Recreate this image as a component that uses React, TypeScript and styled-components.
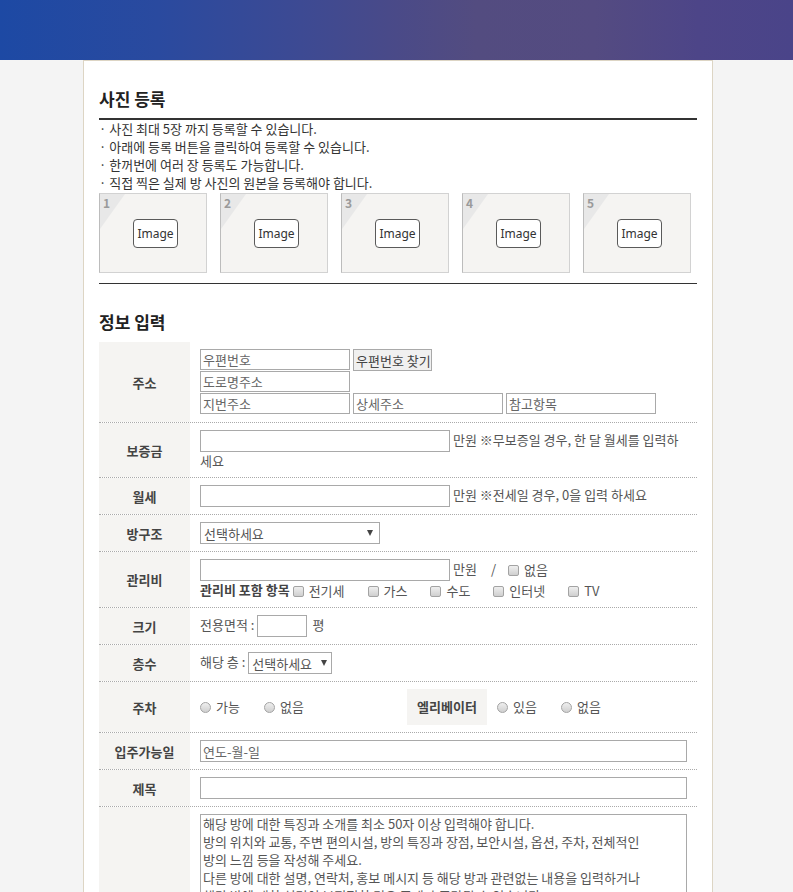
import React from 'react';
import styled, { createGlobalStyle } from 'styled-components';

const GlobalStyle = createGlobalStyle`
  * { box-sizing: border-box; }
  html, body { margin: 0; padding: 0; background: #f4f4f4; }
  body {
    font-family: "Noto Sans CJK KR", "Noto Sans", sans-serif;
    font-size: 13px;
    color: #333;
  }
`;

const Header = styled.header`
  height: 60px;
  background: linear-gradient(
    90deg,
    #1d49a4 0%,
    #2a4a9f 20%,
    #3d4a93 38%,
    #4a4a88 50%,
    #534c80 60%,
    #544b81 75%,
    #4d4588 88%,
    #4a4489 100%
  );
`;

const Page = styled.div`
  padding-left: 3px;
`;

const Container = styled.main`
  width: 630px;
  margin: 0 auto;
  background: #fff;
  border: 1px solid #ddd5c4;
  border-bottom: none;
  padding: 0 15px 60px;
`;

const SectionTitle = styled.h2<{ $underline?: boolean }>`
  margin: 0 0 ${(p) => (p.$underline ? 0 : 10)}px;
  padding: 28px 0 ${(p) => (p.$underline ? 9 : 0)}px;
  font-size: 17px;
  line-height: 20px;
  font-weight: 700;
  color: #222;
  border-bottom: ${(p) => (p.$underline ? '2px solid #333' : 'none')};
`;

const NoticeList = styled.ul`
  margin: 0;
  padding: 0;
  list-style: none;
  line-height: 18px;
  color: #333;
`;

const PhotoGrid = styled.div`
  display: flex;
  gap: 13px;
  margin-top: 1px;
  padding-bottom: 10px;
  border-bottom: 1px solid #333;
`;

const PhotoBox = styled.div`
  position: relative;
  width: 108px;
  height: 80px;
  background: #f5f4f2;
  border: 1px solid #d2d2d2;
  border-left-color: #bcbcbc;
  display: flex;
  align-items: center;
  justify-content: center;
  padding-left: 5px;
  &::before {
    content: '';
    position: absolute;
    top: 0;
    left: 0;
    width: 25px;
    height: 35px;
    background: #e8e8e8;
    clip-path: polygon(0 0, 100% 0, 0 100%);
  }
`;

const PhotoNum = styled.span`
  position: absolute;
  top: 1px;
  left: 3px;
  color: #9a9a9a;
  font-weight: 700;
  font-size: 12px;
  line-height: 16px;
  z-index: 1;
`;

const ImageButton = styled.button`
  position: relative;
  z-index: 1;
  width: 45px;
  height: 29px;
  padding: 0;
  background: #fff;
  border: 1px solid #5a5a5a;
  border-radius: 4px;
  font-family: "Noto Sans", sans-serif;
  font-size: 12px;
  color: #333;
`;

const FormTable = styled.div`
  display: flex;
  flex-direction: column;
`;

const Row = styled.div`
  display: grid;
  grid-template-columns: 91px 1fr;
  border-bottom: 1px dotted #aaa;
`;

const Th = styled.div`
  background: #f5f4f2;
  display: flex;
  align-items: center;
  justify-content: center;
  font-weight: 700;
  color: #444;
`;

const Td = styled.div<{ $pb?: number; $flex?: boolean }>`
  padding: 7px 10px ${(p) => p.$pb ?? 7}px;
  line-height: 18px;
  color: #555;
  min-width: 0;
  ${(p) => (p.$flex ? 'display: flex; align-items: center;' : '')}
`;

const AddressLine = styled.div`
  display: flex;
  align-items: flex-start;
  gap: 3px;
  height: 21px;
  margin-bottom: 1px;
  &:last-child {
    margin-bottom: 0;
  }
`;

const TextInput = styled.input<{ $w?: number; $mr?: number; $ml?: number }>`
  width: ${(p) => (p.$w ? `${p.$w}px` : '100%')};
  height: 22px;
  margin: 0 ${(p) => p.$mr ?? 0}px 0 ${(p) => p.$ml ?? 0}px;
  padding: 0 2px;
  border: 1px solid #a9a9a9;
  font-family: inherit;
  font-size: 13px;
  color: #555;
  vertical-align: middle;
  background: #fff;
  &::placeholder {
    color: #666;
  }
`;

const AddrInput = styled(TextInput)`
  height: 21px;
`;

const FindButton = styled.button`
  width: 79px;
  height: 22px;
  padding: 0 2px;
  background: #f0f0f0;
  border: 1px solid #a9a9a9;
  font-family: inherit;
  font-size: 13px;
  color: #444;
  white-space: nowrap;
`;

const SelectWrap = styled.span<{ $w: number; $pr: number }>`
  display: inline-flex;
  align-items: center;
  width: ${(p) => p.$w}px;
  height: 22px;
  padding: 0 ${(p) => p.$pr}px 0 3px;
  border: 1px solid #a9a9a9;
  background: #fff;
  vertical-align: middle;
`;

const NativeSelect = styled.select`
  appearance: none;
  flex: 1;
  min-width: 0;
  border: none;
  background: transparent;
  padding: 0;
  font-family: inherit;
  font-size: 13px;
  color: #555;
  outline: none;
`;

const Arrow = styled.span`
  width: 0;
  height: 0;
  border-left: 3.5px solid transparent;
  border-right: 3.5px solid transparent;
  border-top: 6px solid #444;
`;

const Check = styled.input`
  appearance: none;
  width: 11px;
  height: 11px;
  margin: 0;
  border: 1px solid #a3a3a3;
  border-radius: 2px;
  background: linear-gradient(#efefef, #cfcfcf);
  flex: none;
`;

const Radio = styled(Check)`
  border-radius: 50%;
`;

const Option = styled.label<{ $ml?: number; $mr?: number }>`
  display: inline-flex;
  align-items: center;
  gap: 5px;
  margin: 0 ${(p) => p.$mr ?? 20}px 0 ${(p) => p.$ml ?? 0}px;
  vertical-align: middle;
  color: #555;
`;

const Strong = styled.span`
  font-weight: 700;
  color: #444;
`;

const Slash = styled.span`
  margin: 0 12px 0 14px;
`;

const ParkingGroup = styled.div`
  width: 207px;
  display: flex;
  align-items: center;
`;

const SubHead = styled.div`
  width: 80px;
  height: 36px;
  margin-right: 10px;
  background: #f5f4f2;
  display: flex;
  align-items: center;
  justify-content: center;
  font-weight: 700;
  color: #444;
`;

const TextArea = styled.textarea`
  display: block;
  width: 100%;
  height: 150px;
  padding: 0 2px;
  border: 1px solid #a9a9a9;
  font-family: inherit;
  font-size: 13px;
  line-height: 18px;
  color: #555;
  resize: none;
  &::placeholder {
    color: #555;
  }
`;

const notices = [
  '· 사진 최대 5장 까지 등록할 수 있습니다.',
  '· 아래에 등록 버튼을 클릭하여 등록할 수 있습니다.',
  '· 한꺼번에 여러 장 등록도 가능합니다.',
  '· 직접 찍은 실제 방 사진의 원본을 등록해야 합니다.',
];

const fees = ['전기세', '가스', '수도', '인터넷', 'TV'];

const descPlaceholder =
  '해당 방에 대한 특징과 소개를 최소 50자 이상 입력해야 합니다.\n' +
  '방의 위치와 교통, 주변 편의시설, 방의 특징과 장점, 보안시설, 옵션, 주차, 전체적인\n' +
  '방의 느낌 등을 작성해 주세요.\n' +
  '다른 방에 대한 설명, 연락처, 홍보 메시지 등 해당 방과 관련없는 내용을 입력하거나\n' +
  '해당 방에 대한 설명이 부적절한 경우 중개가 중단될 수 있습니다.';

function SelectBox({ w, pr }: { w: number; pr: number }) {
  return (
    <SelectWrap $w={w} $pr={pr}>
      <NativeSelect defaultValue="">
        <option value="">선택하세요</option>
      </NativeSelect>
      <Arrow />
    </SelectWrap>
  );
}

export default function App() {
  return (
    <>
      <GlobalStyle />
      <Header />
      <Page>
        <Container>
          <SectionTitle $underline>사진 등록</SectionTitle>
          <NoticeList>
            {notices.map((n) => (
              <li key={n}>{n}</li>
            ))}
          </NoticeList>
          <PhotoGrid>
            {[1, 2, 3, 4, 5].map((n) => (
              <PhotoBox key={n}>
                <PhotoNum>{n}</PhotoNum>
                <ImageButton type="button">Image</ImageButton>
              </PhotoBox>
            ))}
          </PhotoGrid>

          <SectionTitle>정보 입력</SectionTitle>
          <FormTable>
            <Row>
              <Th>주소</Th>
              <Td $pb={8}>
                <AddressLine>
                  <AddrInput $w={150} placeholder="우편번호" />
                  <FindButton type="button">우편번호 찾기</FindButton>
                </AddressLine>
                <AddressLine>
                  <AddrInput $w={150} placeholder="도로명주소" />
                </AddressLine>
                <AddressLine>
                  <AddrInput $w={150} placeholder="지번주소" />
                  <AddrInput $w={150} placeholder="상세주소" />
                  <AddrInput $w={150} placeholder="참고항목" />
                </AddressLine>
              </Td>
            </Row>

            <Row>
              <Th>보증금</Th>
              <Td>
                <TextInput $w={250} $mr={3} />
                만원 ※무보증일 경우, 한 달 월세를 입력하세요
              </Td>
            </Row>

            <Row>
              <Th>월세</Th>
              <Td>
                <TextInput $w={250} $mr={3} />
                만원 ※전세일 경우, 0을 입력 하세요
              </Td>
            </Row>

            <Row>
              <Th>방구조</Th>
              <Td>
                <SelectBox w={180} pr={6} />
              </Td>
            </Row>

            <Row>
              <Th>관리비</Th>
              <Td>
                <TextInput $w={250} $mr={3} />
                만원
                <Slash>/</Slash>
                <Option $mr={0}>
                  <Check type="checkbox" />
                  없음
                </Option>
                <br />
                <Strong>관리비 포함 항목</Strong>
                {fees.map((f) => (
                  <Option key={f} $ml={3} $mr={20}>
                    <Check type="checkbox" />
                    {f}
                  </Option>
                ))}
              </Td>
            </Row>

            <Row>
              <Th>크기</Th>
              <Td>
                전용면적 :
                <TextInput $w={50} $ml={3} $mr={5} />
                평
              </Td>
            </Row>

            <Row>
              <Th>층수</Th>
              <Td>
                해당 층 :{' '}
                <SelectBox w={84} pr={4} />
              </Td>
            </Row>

            <Row>
              <Th>주차</Th>
              <Td $flex>
                <ParkingGroup>
                  <Option $mr={24}>
                    <Radio type="radio" name="parking" />
                    가능
                  </Option>
                  <Option $mr={0}>
                    <Radio type="radio" name="parking" />
                    없음
                  </Option>
                </ParkingGroup>
                <SubHead>엘리베이터</SubHead>
                <Option $mr={24}>
                  <Radio type="radio" name="elevator" />
                  있음
                </Option>
                <Option $mr={0}>
                  <Radio type="radio" name="elevator" />
                  없음
                </Option>
              </Td>
            </Row>

            <Row>
              <Th>입주가능일</Th>
              <Td>
                <TextInput placeholder="연도-월-일" />
              </Td>
            </Row>

            <Row>
              <Th>제목</Th>
              <Td>
                <TextInput />
              </Td>
            </Row>

            <Row>
              <Th />
              <Td $pb={20}>
                <TextArea placeholder={descPlaceholder} />
              </Td>
            </Row>
          </FormTable>
        </Container>
      </Page>
    </>
  );
}
